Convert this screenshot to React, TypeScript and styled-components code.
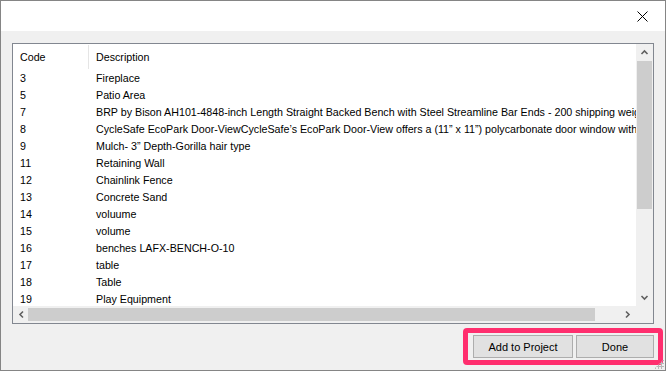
import styled, { createGlobalStyle } from "styled-components";

const GlobalStyle = createGlobalStyle`
  html, body {
    margin: 0;
    padding: 0;
    background: #ffffff;
  }
  body {
    font-family: "Liberation Sans", Arial, sans-serif;
    font-size: 11px;
    color: #000000;
  }
`;

const Window = styled.div`
  box-sizing: border-box;
  width: 666px;
  height: 371px;
  border: 1px solid #858585;
  background: #f0f0f0;
  display: flex;
  flex-direction: column;
  position: relative;
`;

const TitleBar = styled.div`
  height: 30px;
  background: #ffffff;
  display: flex;
  justify-content: flex-end;
  align-items: center;
  padding-right: 8px;
`;

const CloseButton = styled.div`
  width: 30px;
  height: 30px;
  display: flex;
  align-items: center;
  justify-content: center;
`;

const Body = styled.div`
  flex: 1;
  padding: 12px 11px 0 11px;
  display: flex;
  flex-direction: column;
`;

const ListBox = styled.div`
  box-sizing: border-box;
  height: 281px;
  border: 1px solid #828790;
  background: #ffffff;
  display: grid;
  grid-template-columns: 1fr 17px;
  grid-template-rows: 1fr 17px;
`;

const ListContent = styled.div`
  overflow: hidden;
  white-space: nowrap;
  padding-top: 1px;
  font-size: 10.7px;
`;

const HeaderRow = styled.div`
  display: flex;
  height: 24px;
  align-items: center;
  margin-bottom: 1px;
`;

const HeaderCell = styled.div<{ $width?: number }>`
  box-sizing: border-box;
  ${({ $width }) => ($width ? `width: ${$width}px;` : "flex: 1;")}
  height: 24px;
  line-height: 24px;
  padding-left: 7px;
  border-right: ${({ $width }) => ($width ? "1px solid #e5e5e5" : "none")};
`;

const Row = styled.div`
  display: flex;
  height: 17px;
  line-height: 17px;
`;

const Cell = styled.div<{ $width?: number }>`
  box-sizing: border-box;
  ${({ $width }) => ($width ? `width: ${$width}px; flex: none;` : "flex: 1;")}
  padding-left: 7px;
  overflow: hidden;
`;

const VScroll = styled.div`
  background: #f0f0f0;
  display: flex;
  flex-direction: column;
  align-items: center;
`;

const HScroll = styled.div`
  background: #f0f0f0;
  display: flex;
  align-items: center;
`;

const Corner = styled.div`
  background: #f0f0f0;
`;

const ArrowBox = styled.div`
  width: 17px;
  height: 17px;
  flex: none;
  display: flex;
  align-items: center;
  justify-content: center;
`;

const VThumb = styled.div`
  width: 15px;
  height: 148px;
  background: #cdcdcd;
`;

const Track = styled.div`
  flex: 1;
`;

const HThumb = styled.div`
  height: 13px;
  width: 567px;
  background: #cdcdcd;
  margin-left: -2px;
`;

const ButtonRow = styled.div`
  display: flex;
  justify-content: flex-end;
  margin-top: 11px;
`;

const ButtonGroup = styled.div`
  position: relative;
  display: flex;
  gap: 3px;

  &::after {
    content: "";
    position: absolute;
    left: -10px;
    right: -9px;
    top: -7px;
    bottom: -7px;
    border: 5px solid #ff2e6e;
    border-radius: 4px;
    pointer-events: none;
  }
`;

const Button = styled.button<{ $width: number }>`
  box-sizing: border-box;
  width: ${({ $width }) => $width}px;
  height: 23px;
  background: #e1e1e1;
  border: 1px solid #adadad;
  font-family: "Liberation Sans", Arial, sans-serif;
  font-size: 11px;
  color: #000000;
  padding: 0;
`;

const Grip = styled.div`
  position: absolute;
  right: 1px;
  bottom: 1px;
  width: 10px;
  height: 10px;
  background-image: radial-gradient(#b8b8b8 1px, transparent 1.2px);
  background-size: 3px 3px;
  clip-path: polygon(100% 0, 100% 100%, 0 100%);
`;

const Chevron = ({ dir }: { dir: "up" | "down" | "left" | "right" }) => {
  const paths = {
    up: "M1.5 6 L4.5 3 L7.5 6",
    down: "M1.5 3 L4.5 6 L7.5 3",
    left: "M6 1.5 L3 4.5 L6 7.5",
    right: "M3 1.5 L6 4.5 L3 7.5",
  };
  return (
    <svg width="9" height="9" viewBox="0 0 9 9">
      <path d={paths[dir]} fill="none" stroke="#606060" strokeWidth="1.6" />
    </svg>
  );
};

const rows: [string, string][] = [
  ["3", "Fireplace"],
  ["5", "Patio Area"],
  [
    "7",
    "BRP by Bison AH101-4848-inch Length Straight Backed Bench with Steel Streamline Bar Ends - 200 shipping weight",
  ],
  [
    "8",
    "CycleSafe EcoPark Door-ViewCycleSafe\u2019s EcoPark Door-View offers a (11\u201d x 11\u201d) polycarbonate door window with",
  ],
  ["9", "Mulch- 3\u201d Depth-Gorilla hair type"],
  ["11", "Retaining Wall"],
  ["12", "Chainlink Fence"],
  ["13", "Concrete Sand"],
  ["14", "voluume"],
  ["15", "volume"],
  ["16", "benches LAFX-BENCH-O-10"],
  ["17", "table"],
  ["18", "Table"],
  ["19", "Play Equipment"],
];

const App = () => {
  return (
    <>
      <GlobalStyle />
      <Window>
        <TitleBar>
          <CloseButton>
            <svg width="11" height="11" viewBox="0 0 11 11">
              <path d="M0.5 0.5 L10.5 10.5 M10.5 0.5 L0.5 10.5" stroke="#000" strokeWidth="1" />
            </svg>
          </CloseButton>
        </TitleBar>
        <Body>
          <ListBox>
            <ListContent>
              <HeaderRow>
                <HeaderCell $width={76}>Code</HeaderCell>
                <HeaderCell>Description</HeaderCell>
              </HeaderRow>
              {rows.map(([code, desc]) => (
                <Row key={code}>
                  <Cell $width={76}>{code}</Cell>
                  <Cell>{desc}</Cell>
                </Row>
              ))}
            </ListContent>
            <VScroll>
              <ArrowBox>
                <Chevron dir="up" />
              </ArrowBox>
              <VThumb />
              <Track />
              <ArrowBox>
                <Chevron dir="down" />
              </ArrowBox>
            </VScroll>
            <HScroll>
              <ArrowBox>
                <Chevron dir="left" />
              </ArrowBox>
              <HThumb />
              <Track />
              <ArrowBox>
                <Chevron dir="right" />
              </ArrowBox>
            </HScroll>
            <Corner />
          </ListBox>
          <ButtonRow>
            <ButtonGroup>
              <Button $width={100}>Add to Project</Button>
              <Button $width={78}>Done</Button>
            </ButtonGroup>
          </ButtonRow>
        </Body>
        <Grip />
      </Window>
    </>
  );
};

export default App;
